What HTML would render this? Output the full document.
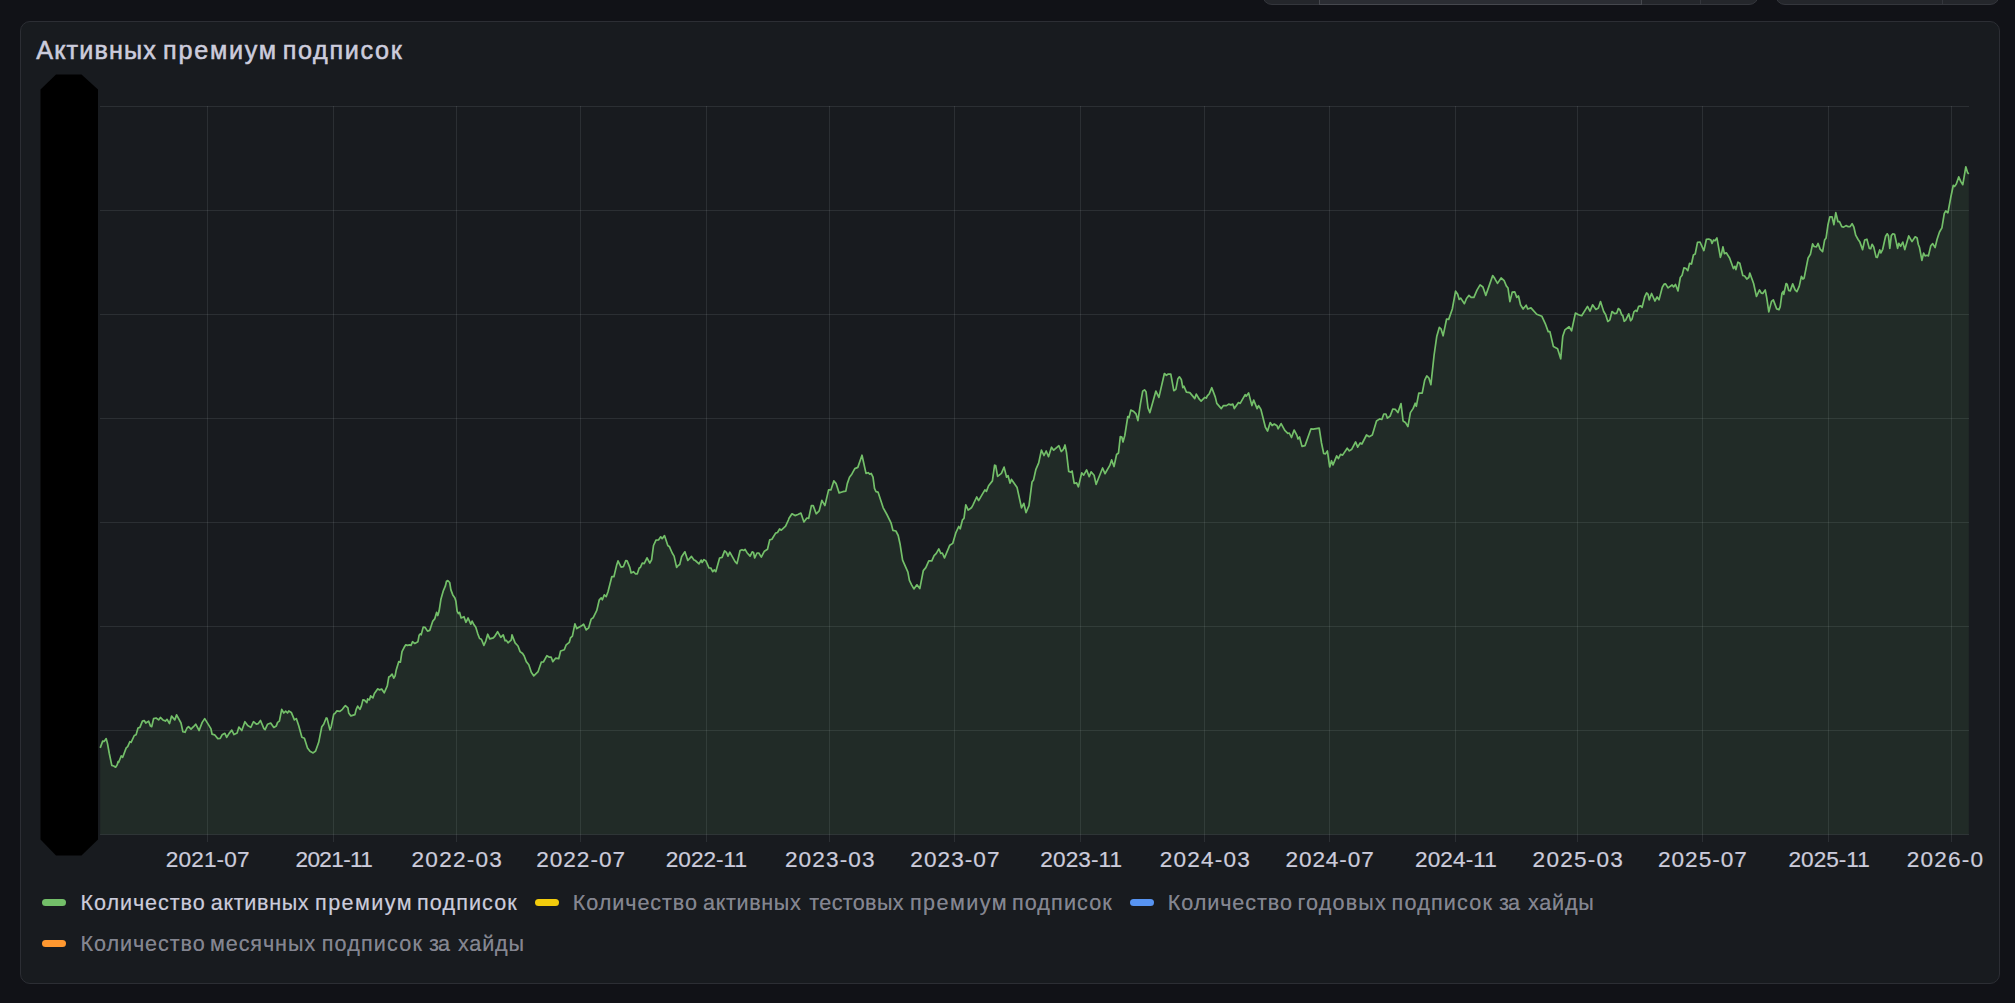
<!DOCTYPE html>
<html lang="ru"><head><meta charset="utf-8"><title>Активных премиум подписок</title>
<style>
html,body{margin:0;padding:0}
body{width:2015px;height:1003px;overflow:hidden;background:#111217;position:relative;font-family:"Liberation Sans",sans-serif;color:#ccccdc}
.btn{position:absolute;top:-20px;height:25px;background:#24262b;border:1px solid #34363c;border-radius:0 0 10px 10px;box-sizing:border-box}
.btn i{position:absolute;top:0;bottom:-1px;width:1px;background:#34363c}
.panel{position:absolute;left:20px;top:21px;width:1980px;height:963px;box-sizing:border-box;background:#181b1f;border:1px solid #2c2e34;border-radius:10px}
.row{position:absolute;left:0;width:2015px;white-space:nowrap}
.row span{position:absolute;top:0}
.title{top:30.07px;height:40px;line-height:40px;font-size:25.2px;color:#ccccdc;-webkit-text-stroke:0.55px #ccccdc}
svg{position:absolute;left:0;top:0}
.ticks{-webkit-text-stroke:0.2px;top:847.47px;height:26px;line-height:26px;font-size:22.6px;color:#ccccdc;width:1983px;overflow:hidden}
.lg{-webkit-text-stroke:0.2px;height:30px;line-height:30px;font-size:21.6px;color:rgba(204,204,220,0.62)}
.lg.on{color:#ccccdc}
.sw{position:absolute;width:24px;height:7px;border-radius:3.5px}
</style></head><body>
<div class="btn" style="left:1262px;width:497px"><i style="left:56px"></i><i style="left:378px"></i><i style="left:437px"></i><b style="position:absolute;left:56px;top:0;width:323px;height:24px;background:#2b2d33;border:1px solid #46484e;border-top:0;box-sizing:border-box"></b></div>
<div class="btn" style="left:1775px;width:225px"><i style="left:166px"></i></div>
<div class="panel"></div>
<div class="row title"><span style="left:36.20px;letter-spacing:1.150px">Активных</span> <span style="left:163.10px;letter-spacing:1.718px">премиум</span> <span style="left:282.70px;letter-spacing:1.667px">подписок</span></div>
<svg width="2015" height="1003" viewBox="0 0 2015 1003">
<polygon points="40.5,89.5 56,74.5 81.5,74.5 98,89.5 98,839.5 81.5,855.5 56,855.5 40.5,839.5" fill="#000"/>
<g fill="rgba(240,250,255,0.09)"><rect x="100" y="106" width="1869" height="1"/><rect x="100" y="210" width="1869" height="1"/><rect x="100" y="314" width="1869" height="1"/><rect x="100" y="418" width="1869" height="1"/><rect x="100" y="522" width="1869" height="1"/><rect x="100" y="626" width="1869" height="1"/><rect x="100" y="730" width="1869" height="1"/><rect x="100" y="834" width="1869" height="1"/><rect x="207" y="106" width="1" height="736"/><rect x="333" y="106" width="1" height="736"/><rect x="456" y="106" width="1" height="736"/><rect x="580" y="106" width="1" height="736"/><rect x="706" y="106" width="1" height="736"/><rect x="829" y="106" width="1" height="736"/><rect x="954" y="106" width="1" height="736"/><rect x="1080" y="106" width="1" height="736"/><rect x="1204" y="106" width="1" height="736"/><rect x="1329" y="106" width="1" height="736"/><rect x="1455" y="106" width="1" height="736"/><rect x="1577" y="106" width="1" height="736"/><rect x="1702" y="106" width="1" height="736"/><rect x="1828" y="106" width="1" height="736"/><rect x="1951" y="106" width="1" height="736"/></g>
<path d="M100.2,747.9 L102.7,741.1 L104.3,741.3 L106.2,738.6 L107.5,743.6 L109.3,753.5 L111.8,765.4 L113.7,766.0 L115.6,767.2 L117.2,764.7 L118.1,761.6 L118.7,762.3 L121.2,756.0 L122.7,757.3 L126.2,747.9 L127.7,746.7 L129.9,741.7 L131.1,742.3 L134.3,735.5 L136.1,734.8 L138.0,728.0 L139.9,727.4 L142.4,721.1 L144.2,720.5 L145.8,723.0 L148.6,721.1 L150.5,726.1 L151.7,726.7 L153.6,718.6 L156.1,718.0 L158.6,719.9 L160.4,717.4 L162.9,719.9 L165.4,721.1 L167.0,719.3 L169.5,723.6 L171.6,716.1 L174.8,719.9 L176.6,714.9 L181.0,723.0 L182.9,731.7 L185.0,732.3 L187.0,728.0 L188.5,726.7 L191.0,729.2 L193.5,726.7 L195.7,724.2 L199.1,730.5 L202.2,722.4 L204.7,718.6 L210.9,728.6 L212.1,734.2 L214.6,734.8 L217.8,738.6 L220.2,738.3 L222.1,734.8 L224.9,733.3 L226.7,737.3 L229.0,733.6 L231.8,730.1 L234.0,734.6 L237.1,733.0 L238.9,727.1 L241.8,730.5 L244.9,721.7 L247.7,725.5 L250.8,727.4 L253.5,721.7 L256.4,724.2 L258.3,723.6 L260.5,720.5 L263.9,728.6 L265.1,729.6 L267.6,724.2 L270.7,723.0 L273.8,727.4 L276.3,725.9 L277.6,722.4 L279.4,721.1 L281.7,709.3 L283.8,713.0 L285.7,711.2 L287.5,713.0 L288.8,710.9 L291.3,712.4 L294.4,719.9 L296.3,718.6 L298.8,726.1 L301.9,737.3 L304.4,738.3 L307.5,747.9 L310.0,751.3 L313.1,752.9 L315.6,751.0 L318.7,742.3 L321.8,726.7 L323.7,724.2 L326.2,718.0 L327.1,718.4 L329.9,729.9 L331.2,726.7 L333.7,714.3 L334.9,713.6 L336.8,710.9 L339.9,711.4 L342.4,709.3 L344.3,706.8 L345.4,705.6 L347.9,707.9 L348.7,712.9 L350.9,715.9 L354.9,714.6 L356.2,709.4 L357.7,706.1 L359.9,709.4 L361.4,705.9 L362.9,699.9 L364.4,700.2 L366.9,702.7 L367.6,698.9 L369.4,699.9 L370.6,695.9 L372.9,697.9 L374.4,693.4 L377.6,688.9 L378.0,689.0 L379.6,689.9 L381.7,689.0 L384.2,692.8 L387.3,685.9 L388.8,676.9 L390.5,675.9 L392.1,674.1 L393.8,678.2 L395.1,675.9 L396.3,669.7 L398.8,661.6 L400.4,662.2 L402.0,651.6 L404.2,647.3 L405.8,644.8 L407.3,645.4 L409.8,644.8 L411.0,645.4 L412.5,641.7 L414.8,643.5 L417.9,641.7 L419.1,635.4 L420.4,633.8 L421.2,634.8 L423.2,627.1 L425.0,627.3 L427.5,631.1 L429.7,630.4 L432.8,621.1 L434.7,618.9 L436.6,612.4 L437.8,615.5 L439.1,611.1 L440.9,599.3 L443.4,590.6 L445.3,586.2 L446.5,581.2 L447.8,580.6 L449.7,582.5 L450.9,589.9 L452.8,594.9 L454.9,598.0 L455.9,601.2 L457.1,611.1 L458.4,613.6 L459.6,612.4 L461.1,618.0 L464.0,616.7 L465.9,622.3 L468.1,618.0 L470.8,624.2 L472.1,621.1 L474.0,624.8 L475.8,627.3 L477.7,633.6 L479.6,638.5 L481.4,639.2 L483.9,645.4 L485.8,641.0 L487.7,634.2 L489.8,638.9 L493.3,637.9 L494.5,636.7 L497.6,631.7 L500.8,637.3 L503.2,634.8 L505.1,640.8 L506.4,640.4 L508.0,642.9 L511.3,639.8 L512.0,634.8 L515.1,642.9 L518.0,646.0 L520.1,651.6 L522.6,653.5 L524.2,656.0 L526.3,661.6 L528.8,664.7 L531.3,672.2 L533.8,675.9 L538.1,671.6 L541.3,662.2 L543.4,662.0 L546.9,655.7 L549.4,657.2 L551.2,657.2 L552.8,661.6 L555.6,658.2 L558.7,658.7 L560.6,651.0 L564.3,649.8 L566.2,644.8 L569.3,642.3 L570.5,637.9 L572.4,636.1 L574.9,623.8 L576.8,628.6 L581.1,626.1 L583.6,624.2 L586.2,629.9 L588.7,627.8 L591.2,619.1 L593.1,617.8 L596.8,610.4 L599.3,599.8 L601.2,597.9 L602.4,599.8 L604.3,594.8 L606.2,596.6 L608.0,591.7 L611.8,576.7 L613.9,576.7 L616.7,564.9 L618.0,560.9 L621.1,567.1 L623.4,566.7 L625.8,560.5 L627.1,560.9 L629.8,567.4 L631.1,573.0 L633.6,571.7 L635.4,573.8 L637.3,573.8 L639.2,568.0 L640.4,567.4 L642.3,563.0 L644.2,563.6 L647.0,557.8 L649.8,563.0 L651.6,559.9 L653.5,545.5 L656.0,540.2 L658.5,539.9 L660.7,536.8 L662.2,538.7 L664.5,535.6 L667.8,545.5 L669.5,546.8 L672.2,553.0 L674.1,556.1 L676.6,567.4 L678.2,565.5 L679.7,564.6 L681.6,556.8 L684.9,551.8 L687.8,560.5 L691.5,556.4 L694.0,559.9 L695.3,560.5 L699.0,563.9 L701.1,560.1 L702.1,562.4 L704.0,559.6 L705.9,560.9 L709.0,568.0 L710.8,568.0 L712.7,571.7 L714.3,569.9 L715.8,571.7 L719.6,558.0 L722.1,557.4 L724.6,550.9 L726.4,552.4 L728.0,556.1 L729.8,552.2 L735.1,561.7 L737.0,563.6 L740.1,550.5 L742.0,549.7 L743.9,550.5 L745.1,549.3 L747.0,552.7 L750.1,556.1 L752.2,551.8 L753.5,552.4 L754.7,558.0 L757.0,553.0 L758.8,553.0 L761.3,557.1 L764.4,551.2 L767.5,549.3 L769.7,539.9 L771.9,539.3 L775.6,533.1 L777.5,532.5 L779.6,529.0 L781.3,530.2 L785.6,526.2 L788.4,520.0 L789.0,518.3 L792.0,513.8 L795.0,515.6 L797.9,514.5 L800.9,513.1 L803.9,522.0 L806.9,518.0 L808.7,518.3 L811.4,505.6 L813.2,505.6 L816.2,513.8 L819.2,510.8 L821.9,500.3 L824.9,505.6 L828.6,489.9 L830.9,489.9 L833.8,480.9 L836.1,483.6 L839.1,492.9 L842.8,491.7 L845.8,491.1 L847.3,483.6 L849.5,477.2 L851.8,474.2 L854.8,468.6 L857.8,467.4 L862.0,455.2 L866.0,473.4 L868.2,472.7 L869.7,474.2 L871.2,473.4 L873.0,477.2 L874.5,488.4 L876.0,491.7 L878.0,492.1 L883.2,507.8 L886.9,514.5 L891.0,522.8 L892.9,530.3 L895.9,531.0 L898.2,535.5 L900.0,543.7 L902.6,560.2 L907.9,572.1 L909.4,580.4 L911.6,584.8 L913.9,588.9 L916.9,584.8 L919.8,588.6 L923.3,570.6 L925.8,567.6 L928.8,560.9 L931.8,560.9 L934.1,555.7 L936.3,553.4 L938.8,548.9 L940.8,553.4 L942.3,553.0 L944.5,557.9 L949.8,545.2 L952.7,543.4 L955.7,533.2 L958.7,526.5 L960.2,528.8 L962.5,519.8 L964.0,518.3 L965.8,504.8 L968.2,510.1 L971.4,507.8 L972.9,505.1 L976.7,497.0 L978.6,500.6 L984.9,489.9 L986.4,491.4 L988.6,485.7 L992.4,480.9 L994.6,465.2 L995.7,465.6 L997.6,476.4 L1001.4,473.4 L1004.1,467.1 L1006.6,477.2 L1008.1,475.7 L1010.0,483.1 L1011.5,479.4 L1017.1,487.6 L1021.5,507.8 L1023.8,503.3 L1026.0,512.6 L1029.0,505.6 L1032.0,482.1 L1033.5,480.1 L1035.8,469.7 L1038.7,462.9 L1041.4,450.2 L1044.0,455.5 L1046.2,451.0 L1048.5,456.7 L1051.5,447.2 L1053.7,450.2 L1058.9,445.7 L1061.2,451.5 L1063.2,449.7 L1065.0,445.0 L1066.5,452.7 L1068.7,471.4 L1070.9,472.2 L1072.1,471.0 L1074.2,483.4 L1076.6,482.9 L1078.4,486.8 L1081.7,472.9 L1083.7,475.2 L1086.6,469.9 L1089.2,476.7 L1091.1,471.9 L1094.1,475.2 L1096.1,484.4 L1097.9,479.7 L1102.6,468.0 L1105.0,473.7 L1109.8,465.4 L1111.6,459.9 L1114.0,466.5 L1116.6,454.5 L1118.5,453.0 L1120.3,436.6 L1121.8,437.0 L1123.0,442.0 L1124.8,435.5 L1127.8,416.5 L1129.0,417.6 L1130.8,410.1 L1133.8,411.6 L1136.0,413.8 L1137.9,420.6 L1140.5,403.4 L1142.7,391.1 L1144.5,389.9 L1146.0,391.7 L1148.0,407.9 L1149.9,412.6 L1155.9,391.1 L1158.9,397.4 L1164.4,373.5 L1166.4,375.3 L1167.9,374.2 L1170.8,374.2 L1173.8,390.7 L1175.9,389.2 L1177.9,378.7 L1179.4,376.8 L1181.3,379.4 L1182.8,387.7 L1183.9,386.2 L1186.4,392.2 L1189.8,392.6 L1194.8,398.6 L1196.3,394.1 L1199.3,399.2 L1201.1,401.1 L1204.8,397.4 L1206.3,398.1 L1207.3,395.9 L1209.3,393.7 L1211.8,387.7 L1215.3,397.1 L1216.8,403.4 L1221.3,408.6 L1223.5,405.6 L1226.5,405.6 L1228.7,404.1 L1231.0,404.9 L1232.8,404.1 L1234.3,408.6 L1238.5,402.6 L1240.2,403.4 L1245.2,394.7 L1246.2,396.2 L1248.6,392.9 L1251.9,405.6 L1253.7,400.1 L1257.1,408.6 L1258.6,405.6 L1260.9,409.4 L1265.4,427.3 L1267.6,431.0 L1270.2,422.5 L1272.1,425.5 L1274.3,424.0 L1277.0,425.8 L1278.1,428.8 L1281.1,423.6 L1284.8,430.3 L1287.8,433.3 L1289.3,433.0 L1291.5,437.5 L1294.1,430.0 L1296.8,435.1 L1298.0,439.0 L1299.5,437.0 L1302.0,446.4 L1305.0,445.6 L1311.0,428.8 L1313.2,429.1 L1319.2,428.1 L1321.5,443.0 L1323.7,453.5 L1325.5,453.9 L1327.4,450.9 L1329.7,466.9 L1331.5,460.7 L1333.0,464.9 L1336.7,455.9 L1338.4,458.6 L1340.5,454.4 L1342.6,455.1 L1347.2,448.2 L1349.3,450.9 L1351.8,449.2 L1355.6,441.9 L1357.7,447.1 L1360.2,442.9 L1361.9,444.0 L1366.5,435.0 L1369.2,436.7 L1372.3,435.0 L1376.5,421.0 L1379.7,418.9 L1381.8,419.5 L1383.8,414.0 L1385.9,414.0 L1387.4,418.2 L1390.1,416.1 L1392.8,409.0 L1395.4,409.4 L1397.9,412.6 L1401.0,403.6 L1403.1,421.0 L1405.4,422.4 L1407.9,426.6 L1410.4,412.6 L1413.2,408.4 L1415.2,403.2 L1416.3,406.3 L1418.8,393.1 L1422.2,393.1 L1424.7,380.1 L1426.8,375.9 L1428.9,378.0 L1430.9,384.7 L1434.1,355.0 L1436.8,336.2 L1439.3,327.4 L1441.0,328.8 L1443.1,335.8 L1446.6,319.0 L1448.7,319.4 L1452.3,309.0 L1455.6,291.2 L1457.7,294.3 L1459.2,299.5 L1460.7,298.1 L1464.4,303.7 L1466.5,298.5 L1469.0,295.4 L1471.1,297.4 L1473.9,297.4 L1477.0,290.1 L1480.1,284.9 L1482.9,287.0 L1485.8,295.4 L1489.1,285.9 L1492.7,275.5 L1494.8,278.6 L1497.5,283.4 L1501.1,278.0 L1504.2,280.7 L1506.3,285.9 L1508.0,288.0 L1509.9,301.6 L1512.2,292.2 L1514.7,291.8 L1516.8,297.4 L1518.5,296.0 L1520.5,304.8 L1523.1,309.0 L1526.2,305.2 L1527.7,309.0 L1531.0,307.9 L1536.7,314.2 L1541.9,316.3 L1545.7,324.7 L1548.2,331.6 L1549.9,331.6 L1553.4,346.6 L1557.6,348.7 L1560.7,358.8 L1562.8,336.2 L1564.9,329.9 L1569.1,326.8 L1571.6,330.9 L1575.4,313.1 L1578.5,314.8 L1581.7,315.7 L1587.5,306.4 L1590.0,311.1 L1592.6,304.8 L1595.9,309.4 L1598.4,307.9 L1600.5,301.6 L1603.7,311.5 L1605.7,314.8 L1607.8,321.5 L1609.9,319.8 L1612.0,311.5 L1614.7,313.6 L1616.8,313.1 L1618.3,308.5 L1620.0,310.0 L1621.7,314.9 L1622.7,315.3 L1624.2,321.3 L1625.7,320.1 L1628.7,313.8 L1630.6,320.8 L1632.1,318.9 L1633.9,311.9 L1635.7,310.4 L1636.9,311.4 L1638.7,306.3 L1640.7,305.9 L1642.1,307.4 L1644.7,296.9 L1646.6,292.9 L1648.1,294.4 L1649.2,299.9 L1651.6,293.5 L1654.9,301.0 L1657.1,296.9 L1659.0,299.9 L1662.3,287.2 L1664.1,284.2 L1665.6,283.9 L1668.0,287.9 L1672.1,285.0 L1673.6,286.9 L1675.5,284.5 L1678.0,290.9 L1680.3,277.5 L1682.1,275.2 L1684.0,267.8 L1686.0,268.5 L1687.8,270.7 L1689.6,263.3 L1691.5,264.0 L1693.4,255.0 L1695.2,254.0 L1697.5,242.3 L1700.0,242.0 L1703.9,250.6 L1706.4,239.3 L1708.7,239.0 L1710.9,240.1 L1712.0,243.5 L1713.5,240.1 L1715.0,240.8 L1716.9,237.9 L1720.4,257.3 L1721.4,254.3 L1722.9,246.8 L1724.4,253.6 L1726.3,252.8 L1729.6,258.0 L1733.4,268.5 L1734.9,266.3 L1735.9,269.6 L1737.9,262.1 L1739.8,263.3 L1742.8,275.5 L1744.6,276.0 L1746.8,279.0 L1748.8,277.5 L1749.8,273.0 L1753.6,283.5 L1756.5,296.5 L1759.5,289.9 L1761.3,293.2 L1762.8,293.5 L1765.2,289.9 L1766.7,297.7 L1768.8,311.9 L1771.5,301.4 L1773.3,299.9 L1776.7,308.9 L1779.0,309.6 L1780.2,306.6 L1782.0,293.2 L1783.2,291.4 L1783.8,294.4 L1786.1,283.5 L1787.2,284.5 L1788.7,290.5 L1790.2,290.9 L1792.7,283.9 L1795.1,289.9 L1796.9,291.7 L1799.2,286.4 L1801.4,276.4 L1802.9,279.0 L1804.1,278.2 L1808.1,258.0 L1810.4,254.3 L1812.6,243.8 L1814.1,246.5 L1816.4,246.8 L1818.1,243.5 L1820.1,249.1 L1822.6,251.6 L1824.6,240.1 L1826.1,237.9 L1828.0,224.7 L1829.8,216.9 L1832.1,216.9 L1833.9,224.7 L1835.8,212.7 L1838.0,221.7 L1839.5,221.7 L1841.8,226.6 L1843.6,227.1 L1846.0,225.6 L1847.8,226.6 L1850.0,226.6 L1850.3,226.4 L1852.1,223.6 L1853.9,227.2 L1855.7,235.2 L1858.1,239.5 L1859.9,242.1 L1862.6,249.6 L1864.7,240.0 L1866.9,239.2 L1869.3,248.4 L1870.7,248.7 L1872.1,244.3 L1873.7,246.9 L1876.1,257.1 L1877.3,257.5 L1879.7,249.9 L1880.9,252.9 L1882.7,249.3 L1885.6,236.2 L1887.2,233.8 L1888.4,235.6 L1889.8,248.4 L1891.3,235.6 L1892.8,233.8 L1894.6,234.4 L1897.6,248.4 L1898.8,243.3 L1900.6,246.3 L1902.8,242.1 L1904.8,249.6 L1908.7,235.9 L1912.0,241.6 L1915.2,236.8 L1917.1,238.0 L1918.3,244.5 L1919.5,247.5 L1921.9,260.3 L1923.6,253.2 L1925.1,255.9 L1927.2,255.3 L1928.4,255.9 L1930.8,245.7 L1932.7,243.6 L1935.1,247.5 L1937.1,239.2 L1939.5,232.0 L1941.9,227.8 L1944.3,213.4 L1945.8,211.0 L1947.9,212.8 L1950.9,196.7 L1953.3,185.3 L1954.5,186.5 L1956.3,184.1 L1958.7,176.9 L1960.7,181.4 L1962.8,184.7 L1965.8,166.8 L1967.6,172.7 L1968.8,173.9 L1968.8,834.5 L100.2,834.5 Z" fill="rgba(120,190,118,0.1)" stroke="none"/>
<path d="M100.2,747.9 L102.7,741.1 L104.3,741.3 L106.2,738.6 L107.5,743.6 L109.3,753.5 L111.8,765.4 L113.7,766.0 L115.6,767.2 L117.2,764.7 L118.1,761.6 L118.7,762.3 L121.2,756.0 L122.7,757.3 L126.2,747.9 L127.7,746.7 L129.9,741.7 L131.1,742.3 L134.3,735.5 L136.1,734.8 L138.0,728.0 L139.9,727.4 L142.4,721.1 L144.2,720.5 L145.8,723.0 L148.6,721.1 L150.5,726.1 L151.7,726.7 L153.6,718.6 L156.1,718.0 L158.6,719.9 L160.4,717.4 L162.9,719.9 L165.4,721.1 L167.0,719.3 L169.5,723.6 L171.6,716.1 L174.8,719.9 L176.6,714.9 L181.0,723.0 L182.9,731.7 L185.0,732.3 L187.0,728.0 L188.5,726.7 L191.0,729.2 L193.5,726.7 L195.7,724.2 L199.1,730.5 L202.2,722.4 L204.7,718.6 L210.9,728.6 L212.1,734.2 L214.6,734.8 L217.8,738.6 L220.2,738.3 L222.1,734.8 L224.9,733.3 L226.7,737.3 L229.0,733.6 L231.8,730.1 L234.0,734.6 L237.1,733.0 L238.9,727.1 L241.8,730.5 L244.9,721.7 L247.7,725.5 L250.8,727.4 L253.5,721.7 L256.4,724.2 L258.3,723.6 L260.5,720.5 L263.9,728.6 L265.1,729.6 L267.6,724.2 L270.7,723.0 L273.8,727.4 L276.3,725.9 L277.6,722.4 L279.4,721.1 L281.7,709.3 L283.8,713.0 L285.7,711.2 L287.5,713.0 L288.8,710.9 L291.3,712.4 L294.4,719.9 L296.3,718.6 L298.8,726.1 L301.9,737.3 L304.4,738.3 L307.5,747.9 L310.0,751.3 L313.1,752.9 L315.6,751.0 L318.7,742.3 L321.8,726.7 L323.7,724.2 L326.2,718.0 L327.1,718.4 L329.9,729.9 L331.2,726.7 L333.7,714.3 L334.9,713.6 L336.8,710.9 L339.9,711.4 L342.4,709.3 L344.3,706.8 L345.4,705.6 L347.9,707.9 L348.7,712.9 L350.9,715.9 L354.9,714.6 L356.2,709.4 L357.7,706.1 L359.9,709.4 L361.4,705.9 L362.9,699.9 L364.4,700.2 L366.9,702.7 L367.6,698.9 L369.4,699.9 L370.6,695.9 L372.9,697.9 L374.4,693.4 L377.6,688.9 L378.0,689.0 L379.6,689.9 L381.7,689.0 L384.2,692.8 L387.3,685.9 L388.8,676.9 L390.5,675.9 L392.1,674.1 L393.8,678.2 L395.1,675.9 L396.3,669.7 L398.8,661.6 L400.4,662.2 L402.0,651.6 L404.2,647.3 L405.8,644.8 L407.3,645.4 L409.8,644.8 L411.0,645.4 L412.5,641.7 L414.8,643.5 L417.9,641.7 L419.1,635.4 L420.4,633.8 L421.2,634.8 L423.2,627.1 L425.0,627.3 L427.5,631.1 L429.7,630.4 L432.8,621.1 L434.7,618.9 L436.6,612.4 L437.8,615.5 L439.1,611.1 L440.9,599.3 L443.4,590.6 L445.3,586.2 L446.5,581.2 L447.8,580.6 L449.7,582.5 L450.9,589.9 L452.8,594.9 L454.9,598.0 L455.9,601.2 L457.1,611.1 L458.4,613.6 L459.6,612.4 L461.1,618.0 L464.0,616.7 L465.9,622.3 L468.1,618.0 L470.8,624.2 L472.1,621.1 L474.0,624.8 L475.8,627.3 L477.7,633.6 L479.6,638.5 L481.4,639.2 L483.9,645.4 L485.8,641.0 L487.7,634.2 L489.8,638.9 L493.3,637.9 L494.5,636.7 L497.6,631.7 L500.8,637.3 L503.2,634.8 L505.1,640.8 L506.4,640.4 L508.0,642.9 L511.3,639.8 L512.0,634.8 L515.1,642.9 L518.0,646.0 L520.1,651.6 L522.6,653.5 L524.2,656.0 L526.3,661.6 L528.8,664.7 L531.3,672.2 L533.8,675.9 L538.1,671.6 L541.3,662.2 L543.4,662.0 L546.9,655.7 L549.4,657.2 L551.2,657.2 L552.8,661.6 L555.6,658.2 L558.7,658.7 L560.6,651.0 L564.3,649.8 L566.2,644.8 L569.3,642.3 L570.5,637.9 L572.4,636.1 L574.9,623.8 L576.8,628.6 L581.1,626.1 L583.6,624.2 L586.2,629.9 L588.7,627.8 L591.2,619.1 L593.1,617.8 L596.8,610.4 L599.3,599.8 L601.2,597.9 L602.4,599.8 L604.3,594.8 L606.2,596.6 L608.0,591.7 L611.8,576.7 L613.9,576.7 L616.7,564.9 L618.0,560.9 L621.1,567.1 L623.4,566.7 L625.8,560.5 L627.1,560.9 L629.8,567.4 L631.1,573.0 L633.6,571.7 L635.4,573.8 L637.3,573.8 L639.2,568.0 L640.4,567.4 L642.3,563.0 L644.2,563.6 L647.0,557.8 L649.8,563.0 L651.6,559.9 L653.5,545.5 L656.0,540.2 L658.5,539.9 L660.7,536.8 L662.2,538.7 L664.5,535.6 L667.8,545.5 L669.5,546.8 L672.2,553.0 L674.1,556.1 L676.6,567.4 L678.2,565.5 L679.7,564.6 L681.6,556.8 L684.9,551.8 L687.8,560.5 L691.5,556.4 L694.0,559.9 L695.3,560.5 L699.0,563.9 L701.1,560.1 L702.1,562.4 L704.0,559.6 L705.9,560.9 L709.0,568.0 L710.8,568.0 L712.7,571.7 L714.3,569.9 L715.8,571.7 L719.6,558.0 L722.1,557.4 L724.6,550.9 L726.4,552.4 L728.0,556.1 L729.8,552.2 L735.1,561.7 L737.0,563.6 L740.1,550.5 L742.0,549.7 L743.9,550.5 L745.1,549.3 L747.0,552.7 L750.1,556.1 L752.2,551.8 L753.5,552.4 L754.7,558.0 L757.0,553.0 L758.8,553.0 L761.3,557.1 L764.4,551.2 L767.5,549.3 L769.7,539.9 L771.9,539.3 L775.6,533.1 L777.5,532.5 L779.6,529.0 L781.3,530.2 L785.6,526.2 L788.4,520.0 L789.0,518.3 L792.0,513.8 L795.0,515.6 L797.9,514.5 L800.9,513.1 L803.9,522.0 L806.9,518.0 L808.7,518.3 L811.4,505.6 L813.2,505.6 L816.2,513.8 L819.2,510.8 L821.9,500.3 L824.9,505.6 L828.6,489.9 L830.9,489.9 L833.8,480.9 L836.1,483.6 L839.1,492.9 L842.8,491.7 L845.8,491.1 L847.3,483.6 L849.5,477.2 L851.8,474.2 L854.8,468.6 L857.8,467.4 L862.0,455.2 L866.0,473.4 L868.2,472.7 L869.7,474.2 L871.2,473.4 L873.0,477.2 L874.5,488.4 L876.0,491.7 L878.0,492.1 L883.2,507.8 L886.9,514.5 L891.0,522.8 L892.9,530.3 L895.9,531.0 L898.2,535.5 L900.0,543.7 L902.6,560.2 L907.9,572.1 L909.4,580.4 L911.6,584.8 L913.9,588.9 L916.9,584.8 L919.8,588.6 L923.3,570.6 L925.8,567.6 L928.8,560.9 L931.8,560.9 L934.1,555.7 L936.3,553.4 L938.8,548.9 L940.8,553.4 L942.3,553.0 L944.5,557.9 L949.8,545.2 L952.7,543.4 L955.7,533.2 L958.7,526.5 L960.2,528.8 L962.5,519.8 L964.0,518.3 L965.8,504.8 L968.2,510.1 L971.4,507.8 L972.9,505.1 L976.7,497.0 L978.6,500.6 L984.9,489.9 L986.4,491.4 L988.6,485.7 L992.4,480.9 L994.6,465.2 L995.7,465.6 L997.6,476.4 L1001.4,473.4 L1004.1,467.1 L1006.6,477.2 L1008.1,475.7 L1010.0,483.1 L1011.5,479.4 L1017.1,487.6 L1021.5,507.8 L1023.8,503.3 L1026.0,512.6 L1029.0,505.6 L1032.0,482.1 L1033.5,480.1 L1035.8,469.7 L1038.7,462.9 L1041.4,450.2 L1044.0,455.5 L1046.2,451.0 L1048.5,456.7 L1051.5,447.2 L1053.7,450.2 L1058.9,445.7 L1061.2,451.5 L1063.2,449.7 L1065.0,445.0 L1066.5,452.7 L1068.7,471.4 L1070.9,472.2 L1072.1,471.0 L1074.2,483.4 L1076.6,482.9 L1078.4,486.8 L1081.7,472.9 L1083.7,475.2 L1086.6,469.9 L1089.2,476.7 L1091.1,471.9 L1094.1,475.2 L1096.1,484.4 L1097.9,479.7 L1102.6,468.0 L1105.0,473.7 L1109.8,465.4 L1111.6,459.9 L1114.0,466.5 L1116.6,454.5 L1118.5,453.0 L1120.3,436.6 L1121.8,437.0 L1123.0,442.0 L1124.8,435.5 L1127.8,416.5 L1129.0,417.6 L1130.8,410.1 L1133.8,411.6 L1136.0,413.8 L1137.9,420.6 L1140.5,403.4 L1142.7,391.1 L1144.5,389.9 L1146.0,391.7 L1148.0,407.9 L1149.9,412.6 L1155.9,391.1 L1158.9,397.4 L1164.4,373.5 L1166.4,375.3 L1167.9,374.2 L1170.8,374.2 L1173.8,390.7 L1175.9,389.2 L1177.9,378.7 L1179.4,376.8 L1181.3,379.4 L1182.8,387.7 L1183.9,386.2 L1186.4,392.2 L1189.8,392.6 L1194.8,398.6 L1196.3,394.1 L1199.3,399.2 L1201.1,401.1 L1204.8,397.4 L1206.3,398.1 L1207.3,395.9 L1209.3,393.7 L1211.8,387.7 L1215.3,397.1 L1216.8,403.4 L1221.3,408.6 L1223.5,405.6 L1226.5,405.6 L1228.7,404.1 L1231.0,404.9 L1232.8,404.1 L1234.3,408.6 L1238.5,402.6 L1240.2,403.4 L1245.2,394.7 L1246.2,396.2 L1248.6,392.9 L1251.9,405.6 L1253.7,400.1 L1257.1,408.6 L1258.6,405.6 L1260.9,409.4 L1265.4,427.3 L1267.6,431.0 L1270.2,422.5 L1272.1,425.5 L1274.3,424.0 L1277.0,425.8 L1278.1,428.8 L1281.1,423.6 L1284.8,430.3 L1287.8,433.3 L1289.3,433.0 L1291.5,437.5 L1294.1,430.0 L1296.8,435.1 L1298.0,439.0 L1299.5,437.0 L1302.0,446.4 L1305.0,445.6 L1311.0,428.8 L1313.2,429.1 L1319.2,428.1 L1321.5,443.0 L1323.7,453.5 L1325.5,453.9 L1327.4,450.9 L1329.7,466.9 L1331.5,460.7 L1333.0,464.9 L1336.7,455.9 L1338.4,458.6 L1340.5,454.4 L1342.6,455.1 L1347.2,448.2 L1349.3,450.9 L1351.8,449.2 L1355.6,441.9 L1357.7,447.1 L1360.2,442.9 L1361.9,444.0 L1366.5,435.0 L1369.2,436.7 L1372.3,435.0 L1376.5,421.0 L1379.7,418.9 L1381.8,419.5 L1383.8,414.0 L1385.9,414.0 L1387.4,418.2 L1390.1,416.1 L1392.8,409.0 L1395.4,409.4 L1397.9,412.6 L1401.0,403.6 L1403.1,421.0 L1405.4,422.4 L1407.9,426.6 L1410.4,412.6 L1413.2,408.4 L1415.2,403.2 L1416.3,406.3 L1418.8,393.1 L1422.2,393.1 L1424.7,380.1 L1426.8,375.9 L1428.9,378.0 L1430.9,384.7 L1434.1,355.0 L1436.8,336.2 L1439.3,327.4 L1441.0,328.8 L1443.1,335.8 L1446.6,319.0 L1448.7,319.4 L1452.3,309.0 L1455.6,291.2 L1457.7,294.3 L1459.2,299.5 L1460.7,298.1 L1464.4,303.7 L1466.5,298.5 L1469.0,295.4 L1471.1,297.4 L1473.9,297.4 L1477.0,290.1 L1480.1,284.9 L1482.9,287.0 L1485.8,295.4 L1489.1,285.9 L1492.7,275.5 L1494.8,278.6 L1497.5,283.4 L1501.1,278.0 L1504.2,280.7 L1506.3,285.9 L1508.0,288.0 L1509.9,301.6 L1512.2,292.2 L1514.7,291.8 L1516.8,297.4 L1518.5,296.0 L1520.5,304.8 L1523.1,309.0 L1526.2,305.2 L1527.7,309.0 L1531.0,307.9 L1536.7,314.2 L1541.9,316.3 L1545.7,324.7 L1548.2,331.6 L1549.9,331.6 L1553.4,346.6 L1557.6,348.7 L1560.7,358.8 L1562.8,336.2 L1564.9,329.9 L1569.1,326.8 L1571.6,330.9 L1575.4,313.1 L1578.5,314.8 L1581.7,315.7 L1587.5,306.4 L1590.0,311.1 L1592.6,304.8 L1595.9,309.4 L1598.4,307.9 L1600.5,301.6 L1603.7,311.5 L1605.7,314.8 L1607.8,321.5 L1609.9,319.8 L1612.0,311.5 L1614.7,313.6 L1616.8,313.1 L1618.3,308.5 L1620.0,310.0 L1621.7,314.9 L1622.7,315.3 L1624.2,321.3 L1625.7,320.1 L1628.7,313.8 L1630.6,320.8 L1632.1,318.9 L1633.9,311.9 L1635.7,310.4 L1636.9,311.4 L1638.7,306.3 L1640.7,305.9 L1642.1,307.4 L1644.7,296.9 L1646.6,292.9 L1648.1,294.4 L1649.2,299.9 L1651.6,293.5 L1654.9,301.0 L1657.1,296.9 L1659.0,299.9 L1662.3,287.2 L1664.1,284.2 L1665.6,283.9 L1668.0,287.9 L1672.1,285.0 L1673.6,286.9 L1675.5,284.5 L1678.0,290.9 L1680.3,277.5 L1682.1,275.2 L1684.0,267.8 L1686.0,268.5 L1687.8,270.7 L1689.6,263.3 L1691.5,264.0 L1693.4,255.0 L1695.2,254.0 L1697.5,242.3 L1700.0,242.0 L1703.9,250.6 L1706.4,239.3 L1708.7,239.0 L1710.9,240.1 L1712.0,243.5 L1713.5,240.1 L1715.0,240.8 L1716.9,237.9 L1720.4,257.3 L1721.4,254.3 L1722.9,246.8 L1724.4,253.6 L1726.3,252.8 L1729.6,258.0 L1733.4,268.5 L1734.9,266.3 L1735.9,269.6 L1737.9,262.1 L1739.8,263.3 L1742.8,275.5 L1744.6,276.0 L1746.8,279.0 L1748.8,277.5 L1749.8,273.0 L1753.6,283.5 L1756.5,296.5 L1759.5,289.9 L1761.3,293.2 L1762.8,293.5 L1765.2,289.9 L1766.7,297.7 L1768.8,311.9 L1771.5,301.4 L1773.3,299.9 L1776.7,308.9 L1779.0,309.6 L1780.2,306.6 L1782.0,293.2 L1783.2,291.4 L1783.8,294.4 L1786.1,283.5 L1787.2,284.5 L1788.7,290.5 L1790.2,290.9 L1792.7,283.9 L1795.1,289.9 L1796.9,291.7 L1799.2,286.4 L1801.4,276.4 L1802.9,279.0 L1804.1,278.2 L1808.1,258.0 L1810.4,254.3 L1812.6,243.8 L1814.1,246.5 L1816.4,246.8 L1818.1,243.5 L1820.1,249.1 L1822.6,251.6 L1824.6,240.1 L1826.1,237.9 L1828.0,224.7 L1829.8,216.9 L1832.1,216.9 L1833.9,224.7 L1835.8,212.7 L1838.0,221.7 L1839.5,221.7 L1841.8,226.6 L1843.6,227.1 L1846.0,225.6 L1847.8,226.6 L1850.0,226.6 L1850.3,226.4 L1852.1,223.6 L1853.9,227.2 L1855.7,235.2 L1858.1,239.5 L1859.9,242.1 L1862.6,249.6 L1864.7,240.0 L1866.9,239.2 L1869.3,248.4 L1870.7,248.7 L1872.1,244.3 L1873.7,246.9 L1876.1,257.1 L1877.3,257.5 L1879.7,249.9 L1880.9,252.9 L1882.7,249.3 L1885.6,236.2 L1887.2,233.8 L1888.4,235.6 L1889.8,248.4 L1891.3,235.6 L1892.8,233.8 L1894.6,234.4 L1897.6,248.4 L1898.8,243.3 L1900.6,246.3 L1902.8,242.1 L1904.8,249.6 L1908.7,235.9 L1912.0,241.6 L1915.2,236.8 L1917.1,238.0 L1918.3,244.5 L1919.5,247.5 L1921.9,260.3 L1923.6,253.2 L1925.1,255.9 L1927.2,255.3 L1928.4,255.9 L1930.8,245.7 L1932.7,243.6 L1935.1,247.5 L1937.1,239.2 L1939.5,232.0 L1941.9,227.8 L1944.3,213.4 L1945.8,211.0 L1947.9,212.8 L1950.9,196.7 L1953.3,185.3 L1954.5,186.5 L1956.3,184.1 L1958.7,176.9 L1960.7,181.4 L1962.8,184.7 L1965.8,166.8 L1967.6,172.7 L1968.8,173.9" fill="none" stroke="#73BF69" stroke-width="1.7" stroke-linejoin="round" stroke-linecap="butt"/>
</svg>
<div class="row ticks"><span style="left:165.80px;letter-spacing:0.138px">2021-07</span><span style="left:295.50px;letter-spacing:-0.649px">2021-11</span><span style="left:411.60px;letter-spacing:1.205px">2022-03</span><span style="left:536.20px;letter-spacing:0.988px">2022-07</span><span style="left:665.80px;letter-spacing:0.001px">2022-11</span><span style="left:784.90px;letter-spacing:1.138px">2023-03</span><span style="left:910.30px;letter-spacing:1.055px">2023-07</span><span style="left:1040.30px;letter-spacing:0.101px">2023-11</span><span style="left:1159.70px;letter-spacing:1.205px">2024-03</span><span style="left:1285.50px;letter-spacing:0.888px">2024-07</span><span style="left:1415.00px;letter-spacing:0.101px">2024-11</span><span style="left:1532.60px;letter-spacing:1.221px">2025-03</span><span style="left:1658.00px;letter-spacing:0.988px">2025-07</span><span style="left:1788.50px;letter-spacing:0.001px">2025-11</span><span style="left:1906.70px;letter-spacing:1.221px">2026-03</span></div>
<i class="sw" style="left:42.2px;top:899px;background:#73BF69"></i><div class="row lg on" style="top:887.52px"><span style="left:80.50px;letter-spacing:0.913px">Количество</span> <span style="left:210.80px;letter-spacing:0.644px">активных</span> <span style="left:315.00px;letter-spacing:1.434px">премиум</span> <span style="left:417.00px;letter-spacing:1.106px">подписок</span></div>
<i class="sw" style="left:535px;top:899px;background:#F2CC0C"></i><div class="row lg" style="top:887.52px"><span style="left:572.80px;letter-spacing:0.913px">Количество</span> <span style="left:703.00px;letter-spacing:0.630px">активных</span> <span style="left:809.30px;letter-spacing:0.339px">тестовых</span> <span style="left:909.90px;letter-spacing:1.434px">премиум</span> <span style="left:1011.90px;letter-spacing:1.121px">подписок</span></div>
<i class="sw" style="left:1130px;top:899px;background:#5794F2"></i><div class="row lg" style="top:887.52px"><span style="left:1167.70px;letter-spacing:0.924px">Количество</span> <span style="left:1297.40px;letter-spacing:1.174px">годовых</span> <span style="left:1391.60px;letter-spacing:1.178px">подписок</span> <span style="left:1498.90px;letter-spacing:-0.704px">за</span> <span style="left:1527.90px;letter-spacing:0.790px">хайды</span></div>
<i class="sw" style="left:42.2px;top:940px;background:#FF9830"></i><div class="row lg" style="top:928.82px"><span style="left:80.50px;letter-spacing:0.913px">Количество</span> <span style="left:210.00px;letter-spacing:0.905px">месячных</span> <span style="left:321.70px;letter-spacing:1.163px">подписок</span> <span style="left:428.90px;letter-spacing:-0.704px">за</span> <span style="left:458.00px;letter-spacing:0.815px">хайды</span></div>
</body></html>
